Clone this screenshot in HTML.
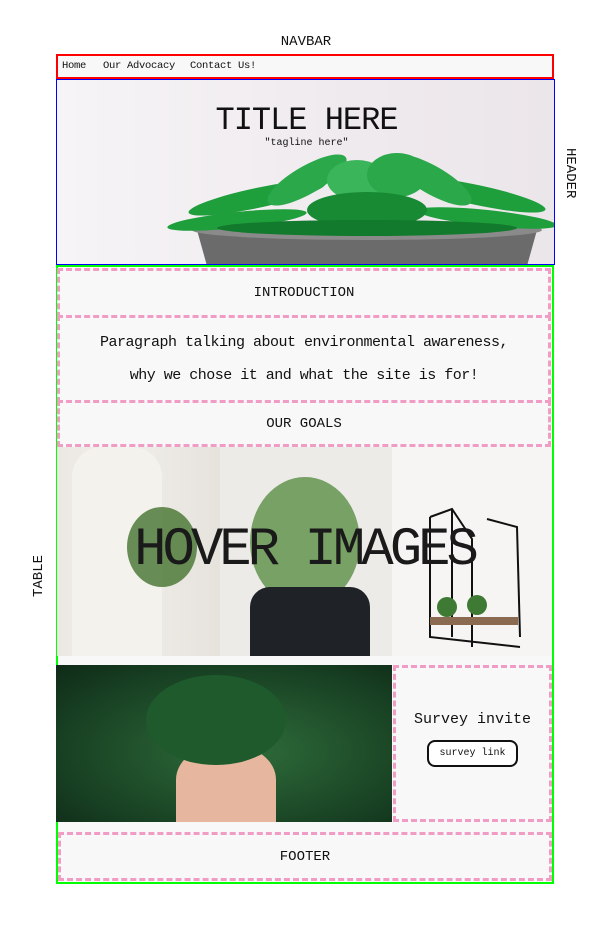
<!DOCTYPE html>
<html><head><meta charset="utf-8"><style>
*{margin:0;padding:0;box-sizing:border-box}
body{width:612px;height:936px;background:#fff;position:relative;font-family:"Liberation Mono","DejaVu Sans Mono",monospace;color:#111;overflow:hidden}
.a{position:absolute}
.dash{position:absolute;border:3px dashed #f09cc4;background:#f8f8f8;display:flex;align-items:center;justify-content:center;text-align:center}
</style></head><body>
<div class="a" style="left:0;width:612px;top:34px;text-align:center;font-size:14px">NAVBAR</div>
<div class="a" style="left:56px;top:54px;width:498px;height:25px;border:2px solid #f00;background:#f8f8f8"></div>
<div class="a" style="left:62px;top:60px;font-size:10.5px;letter-spacing:-0.3px">Home</div>
<div class="a" style="left:103px;top:60px;font-size:10.5px;letter-spacing:-0.3px">Our Advocacy</div>
<div class="a" style="left:190px;top:60px;font-size:10.5px;letter-spacing:-0.3px">Contact Us!</div>
<div class="a" style="left:56px;top:79px;width:499px;height:186px;border:1px solid #00f;overflow:hidden;background:linear-gradient(90deg,#f6f4f6,#efeaee 60%,#ebe6ea)">
 <svg width="499" height="186" style="position:absolute;left:0;top:0">
  <path d="M140 150 L480 150 L470 186 L150 186 Z" fill="#6b6b6b"/>
  <ellipse cx="310" cy="150" rx="175" ry="10" fill="#8a8a8a"/>
  <g fill="#1f9e3c">
   <ellipse cx="180" cy="140" rx="70" ry="8" transform="rotate(-6 180 140)"/>
   <ellipse cx="430" cy="138" rx="70" ry="8" transform="rotate(6 430 138)"/>
   <ellipse cx="200" cy="118" rx="70" ry="10" transform="rotate(-12 200 118)"/>
   <ellipse cx="420" cy="115" rx="70" ry="10" transform="rotate(12 420 115)"/>
   <ellipse cx="250" cy="100" rx="45" ry="14" transform="rotate(-30 250 100)" fill="#2aa84a"/>
   <ellipse cx="375" cy="100" rx="45" ry="14" transform="rotate(30 375 100)" fill="#2aa84a"/>
   <ellipse cx="300" cy="100" rx="30" ry="20" fill="#3bb55a"/>
   <ellipse cx="340" cy="95" rx="30" ry="22" fill="#2aa84a"/>
   <ellipse cx="310" cy="130" rx="60" ry="18" fill="#178a33"/>
   <ellipse cx="310" cy="148" rx="150" ry="8" fill="#127a2c"/>
  </g>
 </svg>
 <div class="a" style="left:0;width:499px;top:22px;text-align:center;font-size:32px;letter-spacing:-1px">TITLE HERE</div>
 <div class="a" style="left:0;width:499px;top:58px;text-align:center;font-size:10px">"tagline here"</div>
</div>
<div class="a" style="top:148px;font-size:14px;transform:rotate(90deg);transform-origin:0 0;left:578px">HEADER</div>
<div class="a" style="left:31px;top:597px;font-size:14px;transform:rotate(-90deg);transform-origin:0 0">TABLE</div>
<div class="a" style="left:56px;top:265px;width:498px;height:619px;border:2px solid #0f0;background:#f8f8f8"></div>
<div class="dash" style="left:57px;top:268px;width:494px;height:50px;font-size:14px">INTRODUCTION</div>
<div class="dash" style="left:57px;top:315px;width:494px;height:88px;font-size:15px;line-height:33px;letter-spacing:-0.5px">Paragraph talking about environmental awareness,<br>why we chose it and what the site is for!</div>
<div class="dash" style="left:57px;top:400px;width:494px;height:47px;font-size:14px">OUR GOALS</div>
<div class="a" style="left:57px;top:447px;width:163px;height:209px;background:linear-gradient(90deg,#ebe8e2,#f1efeb 40%,#e6e2dc)">
 <div class="a" style="left:15px;top:0;width:90px;height:209px;background:#f4f2ed;border-radius:30px 30px 0 0"></div>
 <div class="a" style="left:70px;top:60px;width:70px;height:80px;background:#4d7a3a;border-radius:50%;opacity:.85"></div>
</div>
<div class="a" style="left:220px;top:447px;width:172px;height:209px;background:#ecebe8">
 <div class="a" style="left:30px;top:30px;width:110px;height:130px;background:#5b8f45;border-radius:50%;opacity:.8"></div>
 <div class="a" style="left:30px;top:140px;width:120px;height:69px;background:#1f2226;border-radius:20px 20px 0 0"></div>
</div>
<div class="a" style="left:392px;top:447px;width:160px;height:209px;background:#f6f5f3">
 <svg width="160" height="209"><path d="M38 70 L60 62 L80 92 L80 200 M60 62 L60 190 M95 72 L125 80 L128 190 M38 70 L38 190 L128 200" stroke="#111" stroke-width="2" fill="none"/><rect x="38" y="170" width="88" height="8" fill="#8a6a50"/><circle cx="55" cy="160" r="10" fill="#3f7a35"/><circle cx="85" cy="158" r="10" fill="#3f7a35"/></svg>
</div>
<div class="a" style="left:57px;top:520px;width:495px;text-align:center;font-size:54px;letter-spacing:-4px;color:#1a1a1a">HOVER IMAGES</div>
<div class="a" style="left:56px;top:665px;width:336px;height:157px;background:radial-gradient(ellipse at 55% 55%,#2f6d3a,#173f22 70%,#0f2a17)">
 <div class="a" style="left:120px;top:80px;width:100px;height:77px;background:#e6b79e;border-radius:45% 45% 0 0"></div>
 <div class="a" style="left:90px;top:10px;width:140px;height:90px;background:#1e5a2c;border-radius:50%"></div>
</div>
<div class="dash" style="left:393px;top:665px;width:159px;height:157px;flex-direction:column">
 <div style="font-size:15px;margin-top:-10px">Survey invite</div>
 <div style="margin-top:12px;border:2px solid #111;border-radius:8px;font-size:10px;padding:6px 10px;background:#fff">survey link</div>
</div>
<div class="dash" style="left:58px;top:832px;width:494px;height:49px;font-size:14px">FOOTER</div>
</body></html>
